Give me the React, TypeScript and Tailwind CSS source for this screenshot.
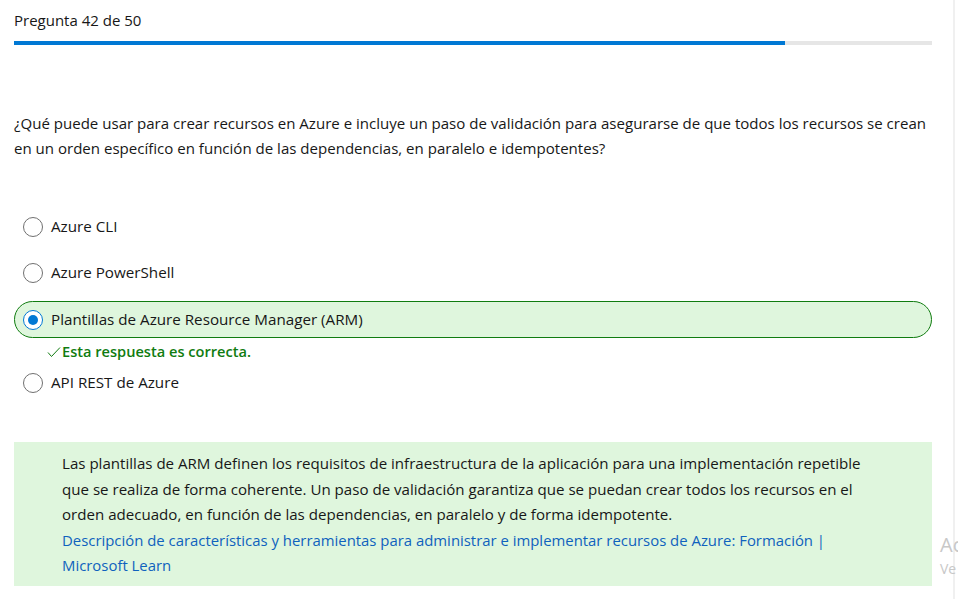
import React from 'react';

const FONT = "font-['Open_Sans','Liberation_Sans',Arial,sans-serif]";

const OPTIONS = [
  { label: 'Azure CLI', selected: false },
  { label: 'Azure PowerShell', selected: false },
  { label: 'Plantillas de Azure Resource Manager (ARM)', selected: true },
  { label: 'API REST de Azure', selected: false },
];

const Radio = ({ checked }: { checked: boolean }) => (
  <span
    className={`w-5 h-5 rounded-full border flex items-center justify-center shrink-0 bg-white ${checked ? 'border-[#0078d4]' : 'border-[#707070]'}`}
  >
    {checked && <span className="w-[10px] h-[10px] rounded-full bg-[#0078d4]" />}
  </span>
);

const App = () => {
  return (
    <div className={`relative w-[958px] h-[599px] overflow-hidden bg-white text-[#171717] ${FONT}`}>
      <div className="w-[918px] ml-[14px]">
        <div className="pt-[10px] text-[15px] leading-[20px]">Pregunta 42 de 50</div>
        <div className="mt-[11px] h-[4px] bg-[#e6e6e6]">
          <div className="h-full w-[771px] bg-[#0078d4]" />
        </div>

        <p className="mt-[66px] text-[15.05px] leading-[25px]">
          ¿Qué puede usar para crear recursos en Azure e incluye un paso de validación para asegurarse de que todos los recursos se crean
          <br />
          en un orden específico en función de las dependencias, en paralelo e idempotentes?
        </p>

        <div className="mt-[47px] flex flex-col">
          {OPTIONS.map((opt, i) => (
            <div key={i} className={i === 1 ? 'mt-[9px]' : i === 2 ? 'mt-[10px]' : ''}>
              <div
                className={`h-[37px] flex items-center gap-[8px] pl-[8px] text-[15.2px] ${opt.selected ? 'rounded-full border border-[#107c10] bg-[#dff6dd]' : 'border border-transparent'}`}
              >
                <Radio checked={opt.selected} />
                <span>{opt.label}</span>
              </div>
              {opt.selected && (
                <div className="mt-[2px] flex items-center h-[24px] pl-[33px] text-[14.6px] font-semibold text-[#107c10]">
                  <svg width="14" height="12" viewBox="0 0 14 12" className="mr-[1px]">
                    <path d="M1 6.5 L4.5 10.5 L13 1.5" fill="none" stroke="#107c10" strokeWidth="1" />
                  </svg>
                  Esta respuesta es correcta.
                </div>
              )}
            </div>
          ))}
        </div>

        <div className="mt-[41px] bg-[#dff6dd] pl-[48px] pt-[9px] pb-[7px] text-[15px] leading-[25.5px]">
          <p className="text-[15.1px]">
            Las plantillas de ARM definen los requisitos de infraestructura de la aplicación para una implementación repetible
            <br />
            que se realiza de forma coherente. Un paso de validación garantiza que se puedan crear todos los recursos en el
            <br />
            orden adecuado, en función de las dependencias, en paralelo y de forma idempotente.
          </p>
          <a className="text-[#0f62be] block text-[14.9px]">
            Descripción de características y herramientas para administrar e implementar recursos de Azure: Formación |
            <br />
            Microsoft Learn
          </a>
        </div>
      </div>

      <div className="absolute top-0 bottom-0 left-[953px] w-[2px] bg-[#f0f0f0]" />
      <div className="absolute left-[940px] top-[533px] text-[20px] leading-[24px] text-[#c8c8c8]">Ac</div>
      <div className="absolute left-[940px] top-[560px] text-[14px] leading-[18px] text-[#c8c8c8]">Ve</div>
    </div>
  );
};

export default App;
